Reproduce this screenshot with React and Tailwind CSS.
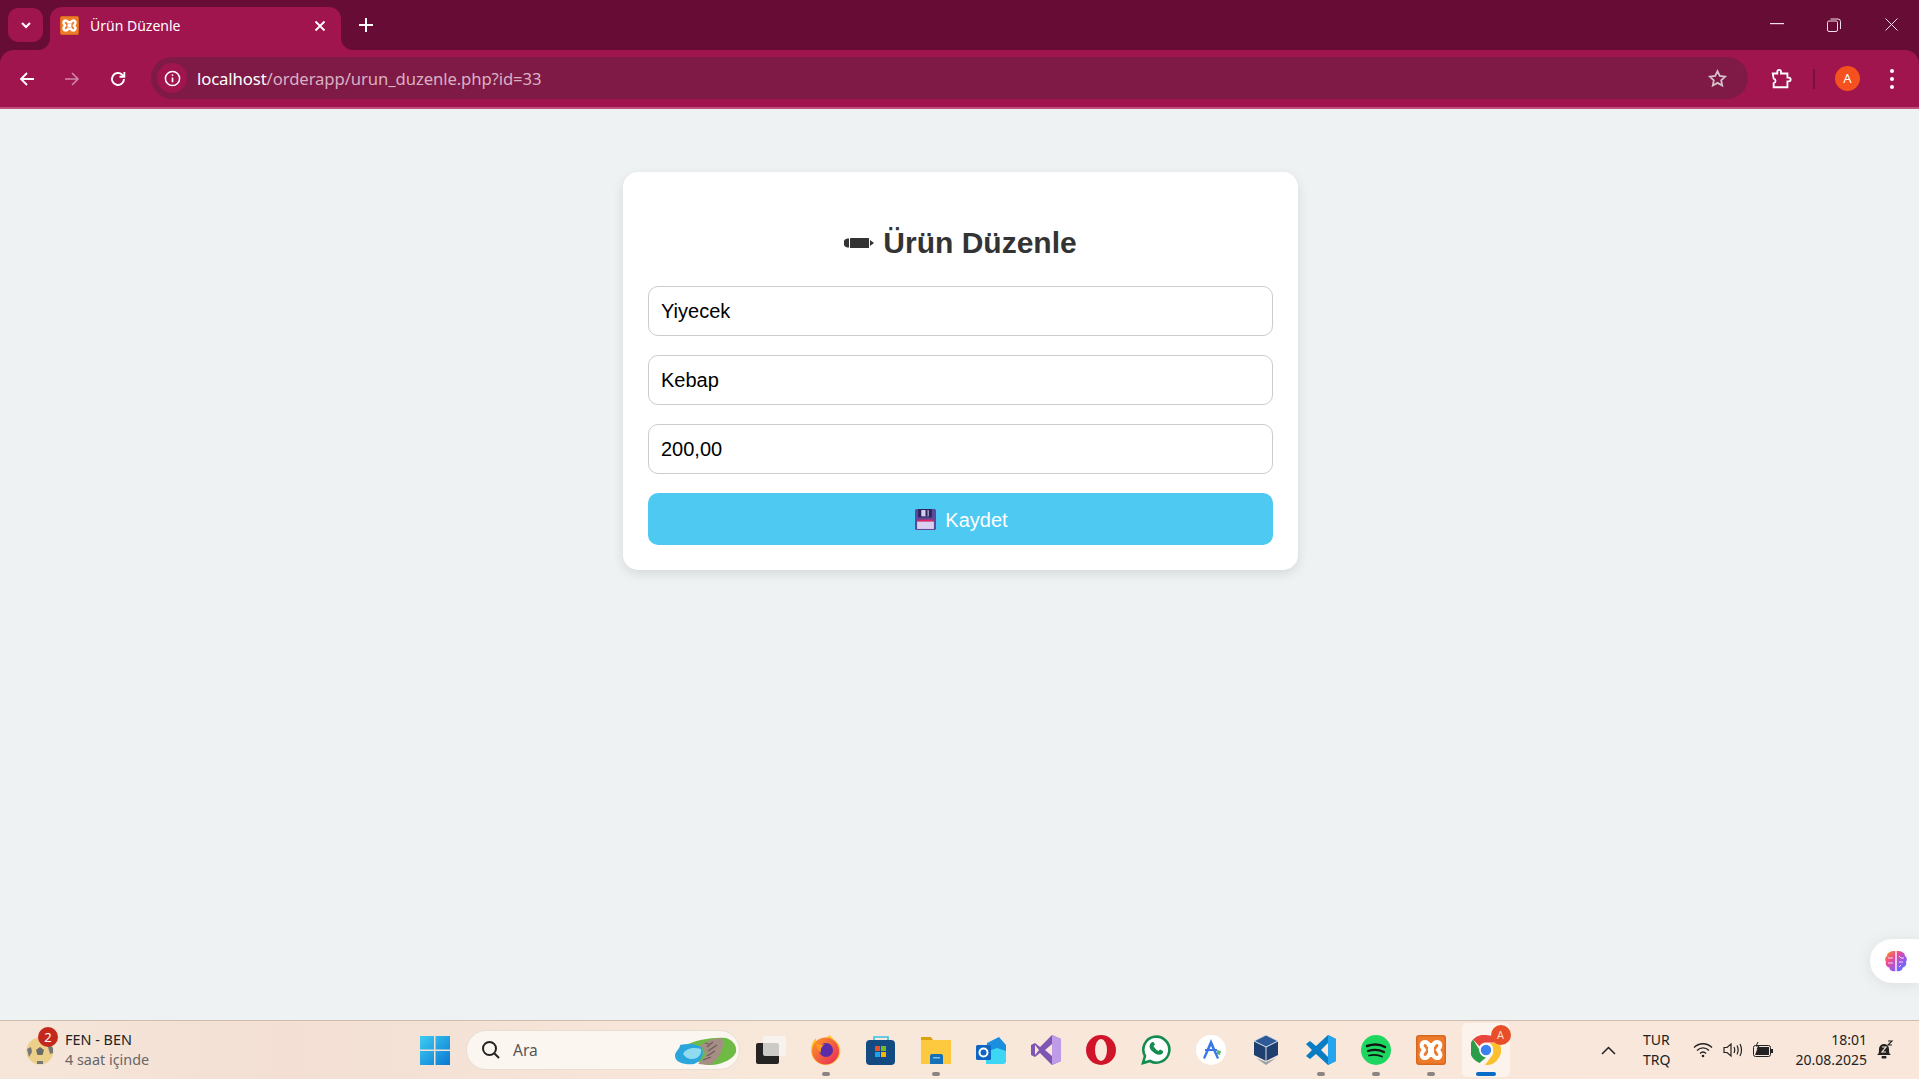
import React from "react";

const ui = { fontFamily: '"Noto Sans", "Open Sans", sans-serif' };

function Flare({ side }) {
  return (
    <svg width="12" height="12" viewBox="0 0 12 12" className={side === "l" ? "absolute bottom-0 -left-[12px]" : "absolute bottom-0 -right-[12px]"}>
      {side === "l" ? <path d="M12 0V12H0A12 12 0 0 0 12 0Z" fill="#a1154f" /> : <path d="M0 0V12H12A12 12 0 0 1 0 0Z" fill="#a1154f" />}
    </svg>
  );
}

function XamppIcon({ size = 18 }) {
  return (
    <svg width={size} height={size} viewBox="0 0 30 30">
      <rect width="30" height="30" rx="3" fill="#d9681f" />
      <rect x="1.500" y="1.500" width="27" height="27" rx="2" fill="#ee7a2b" />
      <path d="M9 7c-3 0-4 3-3 5l2 3-2 3c-1 2 0 5 3 5 2 0 3-1 4-3h4c1 2 2 3 4 3 3 0 4-3 3-5l-2-3 2-3c1-2 0-5-3-5-2 0-3 1-4 3h-4c-1-2-2-3-4-3z" fill="#ee7a2b" stroke="#fff" strokeWidth="4" />
      <rect x="12" y="12" width="6" height="6" fill="#fff" />
    </svg>
  );
}

function TabStrip() {
  return (
    <div className="h-[50px] flex items-start bg-[#660c35] shrink-0">
      <div className="ml-[8px] mt-[8px] w-[35px] h-[34px] rounded-[10px] bg-[#a1154f] flex items-center justify-center">
        <svg width="14" height="14" viewBox="0 0 14 14" fill="none" stroke="#fff" strokeWidth="2"><path d="M3 5l4 4 4-4" /></svg>
      </div>
      <div className="relative ml-[7px] mt-[7px] w-[291px] h-[43px] rounded-t-[12px] bg-[#a1154f] flex items-center pl-[10px] pb-[6px] text-white">
        <Flare side="l" />
        <Flare side="r" />
        <XamppIcon size={19} />
        <span className="ml-[11px] text-[14px] leading-none" style={ui}>Ürün Düzenle</span>
        <svg className="ml-auto mr-[15px]" width="12" height="12" viewBox="0 0 12 12" stroke="#fff" strokeWidth="1.8"><path d="M1.500 1.500l9 9M10.500 1.500l-9 9" /></svg>
      </div>
      <svg className="ml-[18px] mt-[18px]" width="14" height="14" viewBox="0 0 14 14" stroke="#fff" strokeWidth="2"><path d="M7 0v14M0 7h14" /></svg>
      <div className="ml-auto flex items-start text-white">
        <svg className="mt-[23px] mr-[43px]" width="14" height="2" viewBox="0 0 14 2"><rect width="14" height="1.200" fill="#f3dfe8" /></svg>
        <svg className="mt-[18px] mr-[44px]" width="14" height="14" viewBox="0 0 14 14" fill="none" stroke="#f3dfe8" strokeWidth="1"><rect x="0.500" y="3" width="10" height="10.500" rx="1.500" /><path d="M3.500 1h7.500a2.500 2.500 0 0 1 2.500 2.500V11" /></svg>
        <svg className="mt-[18px] mr-[21px]" width="13" height="13" viewBox="0 0 13 13" stroke="#f3dfe8" strokeWidth="1"><path d="M0.500 0.500l12 12M12.500 0.500l-12 12" /></svg>
      </div>
    </div>
  );
}

function Toolbar() {
  return (
    <div className="h-[57px] bg-[#660c35] shrink-0">
      <div className="h-[57px] bg-[#a1154f] rounded-t-[14px] flex items-center text-white">
        <svg className="ml-[19px]" width="16" height="16" viewBox="0 0 16 16" fill="none" stroke="#fff" strokeWidth="1.800"><path d="M15 8H2M8 2L2 8l6 6" /></svg>
        <svg className="ml-[29px]" width="16" height="16" viewBox="0 0 16 16" fill="none" stroke="#cf86a6" strokeWidth="1.600"><path d="M1 8h13M8 2l6 6-6 6" /></svg>
        <svg className="ml-[29px]" width="18" height="18" viewBox="0 0 24 24" fill="none" stroke="#fff" strokeWidth="2.600"><path d="M20 12a8 8 0 1 1-2.400-5.700L20 8.500" /><path d="M20.500 2.500V9H14" strokeWidth="2.400" /></svg>
        <div className="ml-[24px] w-[1597px] h-[42px] -mt-[1px] rounded-full bg-[#7e1a45] flex items-center pl-[6px]">
          <div className="w-[30px] h-[30px] rounded-full bg-[#a1154f] flex items-center justify-center">
            <svg width="17" height="17" viewBox="0 0 18 18" fill="none" stroke="#fff" strokeWidth="1.600"><circle cx="9" cy="9" r="7.500" /><path d="M9 8v5" strokeWidth="1.800" /><circle cx="9" cy="5.400" r="1" fill="#fff" stroke="none" /></svg>
          </div>
          <span className="ml-[10px] mt-[2px] text-[16.7px] leading-none tracking-[-0.1px]" style={ui}>
            <span className="text-white">localhost</span><span className="text-[#d9b0c3]">/orderapp/urun_duzenle.php?id=33</span>
          </span>
          <svg className="ml-auto mr-[20px]" width="21" height="21" viewBox="0 0 24 24" fill="none" stroke="#d5c3cb" strokeWidth="2"><path d="M12 3.500l2.600 5.600 6.100.7-4.500 4.200 1.200 6-5.400-3-5.400 3 1.200-6L3.300 9.800l6.100-.7z" /></svg>
        </div>
        <svg className="ml-[22px]" width="22" height="22" viewBox="0 0 24 24" fill="none" stroke="#fff" strokeWidth="2"><path d="M3 6h5V4a2 2 0 0 1 4 0v2h7v4.500h1.500a2 2 0 0 1 0 4H19V21H4v-4.500a2.500 2.500 0 0 0 2-2.500 2.500 2.500 0 0 0-2-2.500z" /></svg>
        <div className="ml-[21px] w-[2px] h-[20px] bg-[#7a0f3c]" />
        <div className="ml-[20px] w-[25px] h-[25px] rounded-full bg-[#f4511e] flex items-center justify-center text-[13px] text-white" style={ui}>A</div>
        <div className="ml-[30px] flex flex-col gap-[4px]">
          <span className="w-[4px] h-[4px] rounded-full bg-white" />
          <span className="w-[4px] h-[4px] rounded-full bg-white" />
          <span className="w-[4px] h-[4px] rounded-full bg-white" />
        </div>
      </div>
    </div>
  );
}

function Pen() {
  return (
    <svg width="31" height="12" viewBox="0 0 31 12" className="mr-[8px]">
      <path d="M5 1.500H4a4.500 4.500 0 0 0 0 9h1z" fill="#333" />
      <rect x="6" y="1" width="19" height="10" rx="0.500" fill="#333" />
      <path d="M26 3l4 3-4 3z" fill="#333" />
    </svg>
  );
}

function Floppy() {
  return (
    <svg width="21" height="21" viewBox="0 0 20 20" className="mr-[9px]">
      <rect width="20" height="20" rx="1.500" fill="#5b4a9a" />
      <rect x="3" y="0" width="13" height="8" fill="#2e2560" />
      <rect x="6" y="1" width="7" height="6" fill="#d8d0ea" />
      <rect x="10" y="1" width="2" height="6" fill="#2e2560" />
      <rect x="2" y="10" width="16" height="2" fill="#e0245e" />
      <rect x="2" y="12" width="16" height="7" fill="#d9cfee" />
    </svg>
  );
}

function Field({ value }) {
  return (
    <input
      readOnly
      value={value}
      className="block w-full h-[50px] mb-[19px] px-[12px] rounded-[10px] border border-[#ccc] bg-white text-[20px] text-black outline-none"
      style={{ fontFamily: '"Liberation Sans", Arial, sans-serif' }}
    />
  );
}

function Card() {
  return (
    <div className="w-[675px] ml-[623px] mt-[63px] bg-white rounded-[15px] px-[25px] pt-[51px] pb-[25px] shadow-[0_4px_12px_rgba(0,0,0,0.1)]" style={{ fontFamily: '"Liberation Sans", Arial, sans-serif' }}>
      <h2 className="flex items-center justify-center h-[38px] mb-[25px] pt-[1px] text-[30px] leading-none font-bold text-[#333]">
        <Pen />Ürün Düzenle
      </h2>
      <Field value="Yiyecek" />
      <Field value="Kebap" />
      <Field value="200,00" />
      <button className="w-full h-[52px] pt-[1px] pl-[2px] rounded-[10px] bg-[#4dc9f2] text-white text-[20px] flex items-center justify-center">
        <Floppy />Kaydet
      </button>
    </div>
  );
}

function Slot({ children, dot, active }) {
  return (
    <div className={"relative h-[54px] flex items-center justify-center rounded-[5px] " + (active ? "w-[48px] mx-[3.500px] bg-[#fcf3ec]" : "w-[55px]")}>
      {children}
      {dot && <span className="absolute bottom-[1px] left-1/2 -translate-x-1/2 w-[8px] h-[4px] rounded-full bg-[#8c8480]" />}
      {active && <span className="absolute bottom-[1px] left-1/2 -translate-x-1/2 w-[20px] h-[4px] rounded-full bg-[#0a6cc4]" />}
    </div>
  );
}

function Taskbar() {
  return (
    <div className="h-[59px] shrink-0 border-t border-[#cbbdb2] bg-[linear-gradient(90deg,#f6e6da_0%,#f3dfd4_15%,#f8e8da_40%,#f8e7da_100%)] flex items-center relative" style={ui}>
      <div className="relative ml-[26px] w-[28px] h-[28px] mt-[2px]">
        <svg width="28" height="28" viewBox="0 0 28 28">
          <circle cx="14" cy="14" r="13.500" fill="#ecd08a" />
          <path d="M14 10l4 3-1.500 5h-5L10 13z" fill="#6b6b6b" />
          <path d="M1 12l4-2 1 5-3 5zM27 11l-4-4-1 3 2 7 3-1zM11 27l6 0 0-3-6 0z" fill="#777" />
        </svg>
        <span className="absolute -top-[10px] left-[12px] w-[20px] h-[20px] rounded-full bg-[#c4281c] text-white text-[13px] leading-none flex items-center justify-center">2</span>
      </div>
      <div className="ml-[11px] w-[355px] flex flex-col text-[14.4px] leading-[20px] -mt-[1px]">
        <span className="text-[#222]">FEN - BEN</span>
        <span className="text-[#666]">4 saat içinde</span>
      </div>
      <svg width="30" height="30" viewBox="0 0 30 30" className="-mt-[1px]">
        <defs><linearGradient id="win" x1="0" y1="0" x2="1" y2="1"><stop offset="0" stopColor="#3ecdf2" /><stop offset="1" stopColor="#0a78d2" /></linearGradient></defs>
        <path d="M0 1h14v13.500H0zM15.500 1H30v13.500H15.500zM0 16h14v14H0zM15.500 16H30v14H15.500z" fill="url(#win)" />
      </svg>
      <div className="ml-[16px] w-[274px] h-[40px] rounded-full bg-[#fcf6f0] border border-[#e8ddd2] flex items-center relative">
        <svg className="ml-[14px]" width="20" height="20" viewBox="0 0 20 20" fill="none" stroke="#222" strokeWidth="2"><circle cx="8.500" cy="8.500" r="6.500" /><path d="M13.500 13.500L18 18" /></svg>
        <span className="ml-[12px] mt-[1px] text-[15.500px] text-[#555]">Ara</span>
        <svg className="ml-auto mr-[2px] mt-[2px]" width="63" height="29" viewBox="0 0 63 29">
          <path d="M12 8c10-5 26-8 40-7 7 2 11 8 10 14-2 6-12 12-24 13-12 1-20-6-26-20z" fill="#6fba45" />
          <path d="M26 9c4-4 14-8 22-8 3 7 0 19-12 27l-12-1c8-6 10-12 2-18z" fill="#a58f84" />
          <path d="M31 6l4 1M33 10l6-5M34 14l9-6M33 19l8-5M29 23l8-3" stroke="#6d5a5a" strokeWidth="1.200" />
          <path d="M1 19c0-5 5-7 5-11 8-2 18-1 22 3 3 8-2 14-8 16-8 1-19-1-19-8z" fill="#2aa6dc" />
          <path d="M9 17c3-6 11-7 18-5 1 5-3 10-9 10-4 0-7-2-9-5z" fill="#8fdcf0" />
        </svg>
      </div>
      <div className="ml-[3px] flex items-center">
        <Slot>
          <svg width="30" height="28" viewBox="0 0 30 28">
            <rect x="0" y="7" width="23" height="21" rx="2" fill="#262422" />
            <rect x="7" y="0" width="23" height="20" rx="2" fill="#f7f5f3" fillOpacity="0.8" />
          </svg>
        </Slot>
        <Slot dot>
          <svg width="30" height="30" viewBox="0 0 30 30">
            <defs><linearGradient id="ff" x1="0" y1="0" x2="1" y2="1"><stop offset="0" stopColor="#ff9b22" /><stop offset="1" stopColor="#e8265e" /></linearGradient></defs>
            <path d="M19 0c2 4 8 6 10 13 2 9-5 17-14 17S0 23 0 15C0 10 2 6 5 3c0 3 1 5 3 6 2-4 6-5 11-9z" fill="#ffc42a" />
            <circle cx="14.500" cy="16" r="13.500" fill="url(#ff)" />
            <circle cx="15" cy="15" r="7" fill="#5b2ca8" />
            <path d="M5 8c3 2 6 2 9 1-3 2-5 5-4 9-3-2-5-6-5-10z" fill="#ff9a1f" />
          </svg>
        </Slot>
        <Slot>
          <svg width="30" height="30" viewBox="0 0 30 30">
            <path d="M8 5V2h14v3" fill="none" stroke="#35c0e8" strokeWidth="1.600" />
            <rect y="5" width="29" height="25" rx="4" fill="#144a82" />
            <rect x="9" y="11" width="5" height="5" fill="#e8502a" /><rect x="15" y="11" width="5" height="5" fill="#7ab82a" />
            <rect x="9" y="17" width="5" height="5" fill="#1aa5e8" /><rect x="15" y="17" width="5" height="5" fill="#f5b400" />
          </svg>
        </Slot>
        <Slot dot>
          <svg width="30" height="28" viewBox="0 0 30 28">
            <path d="M0 1h10l2 3H0z" fill="#dba20a" />
            <path d="M0 4h30v24H0z" fill="#fcc93f" />
            <path d="M9 20a2 2 0 0 1 2-2h9a2 2 0 0 1 2 2v8H9z" fill="#1670b8" />
            <rect x="12" y="21" width="7" height="1.500" fill="#7cc0ea" />
          </svg>
        </Slot>
        <Slot>
          <svg width="30" height="27" viewBox="0 0 30 27">
            <path d="M11 6L23 0l7 8v15a3 3 0 0 1-3 3H10z" fill="#1a8fe0" />
            <path d="M10 15l11-4 9 3v10a3 3 0 0 1-3 3H10z" fill="#3dd6f5" />
            <rect y="8" width="15" height="15" rx="1.500" fill="#0f66c2" />
            <circle cx="7.500" cy="15.500" r="4" fill="none" stroke="#fff" strokeWidth="2" />
          </svg>
        </Slot>
        <Slot>
          <svg width="30" height="30" viewBox="0 0 30 30">
            <path d="M21 0l9 4v22l-9 4-12-12-5 4-4-2V10l4-2 5 4z" fill="#7f55b4" />
            <path d="M21 0l9 4v22l-9 4z" fill="#c09be8" />
            <path d="M4 10v10l4-5zM21 9l-7 6 7 6z" fill="#f8e7da" />
          </svg>
        </Slot>
        <Slot>
          <svg width="30" height="30" viewBox="0 0 30 30">
            <ellipse cx="15" cy="15" rx="15" ry="15" fill="#d0152a" />
            <ellipse cx="15" cy="15" rx="6" ry="11" fill="#f8e7da" />
          </svg>
        </Slot>
        <Slot>
          <svg width="30" height="30" viewBox="0 0 30 30" fill="none">
            <path d="M2 28l2-7A13 13 0 1 1 9 26z" stroke="#128c4f" strokeWidth="2.600" fill="#fff" />
            <path d="M10 8c-2 2-2 5 1 8s7 5 10 3c1-1 1-2 1-3l-3-1.500-1.500 1.500c-2-.5-4-3-5-5L14 9.500 12.500 7c-1 0-2 0-2.500 1z" fill="#128c4f" />
          </svg>
        </Slot>
        <Slot>
          <svg width="30" height="30" viewBox="0 0 30 30">
            <circle cx="15" cy="15" r="15" fill="#fff" />
            <path d="M15 4l8 19-2 1-6-13-6 13-2-1z" fill="#3b78e7" />
            <rect x="9" y="14" width="12" height="2" fill="#3b78e7" />
            <path d="M21 15l4 1-1 4-3-1z" fill="#5ab56a" />
          </svg>
        </Slot>
        <Slot>
          <svg width="28" height="32" viewBox="0 0 28 32">
            <path d="M14 1l12 6v14l-12 6-12-6V7z" fill="#1f3f70" />
            <path d="M14 1l12 6-12 6-12-6z" fill="#2d5a96" stroke="#e6e6e6" strokeWidth="1" />
            <path d="M14 13v14" stroke="#dcdcdc" strokeWidth="1" />
            <path d="M4 24l10 7 10-7-10 4z" fill="#98a0aa" />
          </svg>
        </Slot>
        <Slot dot>
          <svg width="30" height="30" viewBox="0 0 30 30">
            <path d="M22 0l8 4v22l-8 4-12-11-6 5-4-3 6-6-6-6 4-3 6 5z" fill="#0a7cc4" />
            <path d="M22 0l8 4v22l-8 4z" fill="#27a4ee" />
            <path d="M22 8l-7 7 7 7z" fill="#f8e7da" />
          </svg>
        </Slot>
        <Slot dot>
          <svg width="30" height="30" viewBox="0 0 30 30" fill="none">
            <circle cx="15" cy="15" r="15" fill="#1ed760" />
            <path d="M6 11c6-2 13-2 18 1" stroke="#141414" strokeWidth="2.500" strokeLinecap="round" />
            <path d="M7 16c5-1.500 11-1.500 16 1" stroke="#141414" strokeWidth="2.200" strokeLinecap="round" />
            <path d="M8 20.500c4-1 9-1 13 1" stroke="#141414" strokeWidth="1.800" strokeLinecap="round" />
          </svg>
        </Slot>
        <Slot dot><XamppIcon size={30} /></Slot>
        <Slot active>
          <svg width="30" height="30" viewBox="0 0 30 30">
            <path d="M15 0a15 15 0 0 1 13 7.500H15a7.500 7.500 0 0 0-6.500 3.750L2 4.500A15 15 0 0 1 15 0z" fill="#e8453c" />
            <path d="M2 4.500l6.500 10.500a7.500 7.500 0 0 0 6.500 7.500L8.500 28A15 15 0 0 1 2 4.500z" fill="#2a9c4a" />
            <path d="M28 7.500A15 15 0 0 1 14 30l6-8a7.500 7.500 0 0 0 2-7 7.500 7.500 0 0 0-3-7z" fill="#fbc02d" />
            <circle cx="15" cy="15" r="6" fill="#3b82f0" stroke="#fff" strokeWidth="1.500" />
          </svg>
          <span className="absolute top-[2px] -right-[1px] w-[20px] h-[20px] rounded-full bg-[#e84e28] text-[#fbdcc8] text-[11px] flex items-center justify-center">A</span>
        </Slot>
      </div>
      <svg className="ml-[88px]" width="15" height="9" viewBox="0 0 15 9" fill="none" stroke="#222" strokeWidth="1.500"><path d="M1 8l6.500-6.500L14 8" /></svg>
      <div className="ml-[27px] flex flex-col text-[14px] leading-[20px] text-[#222] -mt-[1px]">
        <span>TUR</span><span>TRQ</span>
      </div>
      <svg className="ml-[23px]" width="20" height="16" viewBox="0 0 20 16" fill="none" stroke="#222" strokeWidth="1.300"><path d="M1 5.500c5-5 13-5 18 0M4 8.500c3.500-3.500 8.500-3.500 12 0M7 11.500c2-2 4-2 6 0" /><circle cx="10" cy="14" r="1.300" fill="#222" stroke="none" /></svg>
      <svg className="ml-[10px]" width="20" height="16" viewBox="0 0 20 16" fill="none" stroke="#222" strokeWidth="1.200"><path d="M1 5.500h3L8 2v12L4 10.500H1zM11 5c1 2 1 4 0 6M14 3.500c1.500 3 1.500 6 0 9M17 2c2 4 2 8 0 12" /></svg>
      <svg className="ml-[10px]" width="20" height="16" viewBox="0 0 20 16"><rect x="0.500" y="3.500" width="17" height="11" rx="2" fill="none" stroke="#222" /><path d="M2 13l3-8h11v8z" fill="#222" /><rect x="18" y="7" width="2" height="4" fill="#222" /><path d="M5 0L3 4h3L4 7" stroke="#222" fill="none" /></svg>
      <div className="ml-auto mr-[3px] flex flex-col items-end text-[14px] leading-[20px] text-[#222] -mt-[1px]">
        <span>18:01</span><span>20.08.2025</span>
      </div>
      <svg className="mr-[25px] ml-[6px]" width="18" height="20" viewBox="0 0 18 20">
        <path d="M1 15c2-1 2-3 2-6a5 5 0 0 1 10 0c0 3 0 5 2 6z" fill="#222" />
        <rect x="5.500" y="16" width="5" height="2.500" rx="1" fill="#222" />
        <path d="M12 1h4l-4 4h4" fill="none" stroke="#222" strokeWidth="1.100" />
        <path d="M6 7h4L6 12h4" fill="none" stroke="#f8e7da" strokeWidth="1.200" />
      </svg>
    </div>
  );
}

function BrainWidget() {
  return (
    <div className="absolute right-0 top-[830px] w-[49px] h-[44px] bg-white rounded-l-full shadow-[0_2px_16px_rgba(0,0,0,0.08)] flex items-center pl-[14px]">
      <svg width="24" height="24" viewBox="0 0 24 24">
        <defs><linearGradient id="br" x1="0" y1="0" x2="1" y2="1"><stop offset="0" stopColor="#f59e0b" /><stop offset="0.35" stopColor="#ec4899" /><stop offset="0.7" stopColor="#8b5cf6" /><stop offset="1" stopColor="#3b82f6" /></linearGradient></defs>
        <path d="M11.300 2v20c-3 1-6-1-6-3.500C2.500 18 1 15 2 13c-1.500-2-1-5 1-6 0-3 3-5 8.300-5zM12.700 2c5.300 0 8.300 2 8.300 5 2 1 2.500 4 1 6 1 2-.5 5-3.300 5.500 0 2.500-3 4.500-6 3.500z" fill="url(#br)" />
        <path d="M4 9h5M4 14h5M15 7l2 2 3 0M15 13l4 0M15 18l2-2" stroke="#fff" strokeWidth="0.800" fill="none" />
      </svg>
    </div>
  );
}

export default function App() {
  return (
    <div className="relative w-[1919px] h-[1079px] overflow-hidden flex flex-col bg-[#eef2f3]">
      <TabStrip />
      <Toolbar />
      <div className="h-[2px] bg-[#c14f7d] shrink-0" />
      <main className="flex-1 relative">
        <Card />
        <BrainWidget />
      </main>
      <Taskbar />
    </div>
  );
}
